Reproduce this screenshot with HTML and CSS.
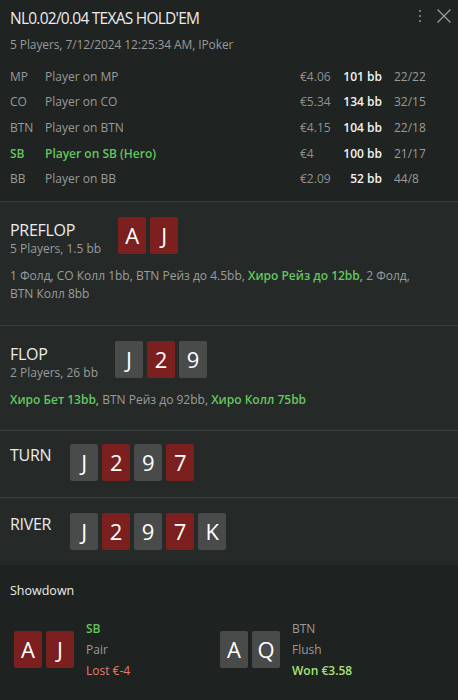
FILE: index.html
```html
<!DOCTYPE html>
<html>
<head>
<meta charset="utf-8">
<link rel="stylesheet" href="styles.css">
</head>
<body>
<div class="panel">
  <header class="head">
    <div class="head-top">
      <div class="title">NL0.02/0.04 TEXAS HOLD'EM</div>
      <div class="head-icons">
        <svg class="icon-dots" width="4" height="14" viewBox="0 0 4 14"><circle cx="2" cy="2" r="1.1" fill="#8a8d8c"/><circle cx="2" cy="7" r="1.1" fill="#8a8d8c"/><circle cx="2" cy="12" r="1.1" fill="#8a8d8c"/></svg>
        <svg class="icon-close" width="16" height="16" viewBox="0 0 16 16"><path d="M1.5 1.5 L14.5 14.5 M14.5 1.5 L1.5 14.5" stroke="#9a9d9c" stroke-width="1.3" fill="none"/></svg>
      </div>
    </div>
    <div class="subtitle">5 Players, 7/12/2024 12:25:34 AM, IPoker</div>
    <div class="players">
      <div class="prow"><span class="pos">MP</span><span class="pname">Player on MP</span><span class="amt">€4.06</span><span class="bb">101 bb</span><span class="stat">22/22</span></div>
      <div class="prow"><span class="pos">CO</span><span class="pname">Player on CO</span><span class="amt">€5.34</span><span class="bb">134 bb</span><span class="stat">32/15</span></div>
      <div class="prow"><span class="pos">BTN</span><span class="pname">Player on BTN</span><span class="amt">€4.15</span><span class="bb">104 bb</span><span class="stat">22/18</span></div>
      <div class="prow hero"><span class="pos">SB</span><span class="pname">Player on SB (Hero)</span><span class="amt">€4</span><span class="bb">100 bb</span><span class="stat">21/17</span></div>
      <div class="prow"><span class="pos">BB</span><span class="pname">Player on BB</span><span class="amt">€2.09</span><span class="bb">52 bb</span><span class="stat">44/8</span></div>
    </div>
  </header>

  <section class="street street-pre">
    <div class="street-top">
      <div class="street-label">
        <div class="street-name">PREFLOP</div>
        <div class="street-sub">5 Players, 1.5 bb</div>
      </div>
      <div class="cards"><span class="card red">A</span><span class="card red">J</span></div>
    </div>
    <div class="actions">1 Фолд, CO Колл 1bb, BTN Рейз до 4.5bb, <b class="hero-act">Хиро Рейз до 12bb,</b> 2 Фолд, BTN Колл 8bb</div>
  </section>

  <section class="street street-flop">
    <div class="street-top">
      <div class="street-label">
        <div class="street-name">FLOP</div>
        <div class="street-sub">2 Players, 26 bb</div>
      </div>
      <div class="cards"><span class="card gray">J</span><span class="card red">2</span><span class="card gray">9</span></div>
    </div>
    <div class="actions"><b class="hero-act">Хиро Бет 13bb,</b> BTN Рейз до 92bb, <b class="hero-act">Хиро Колл 75bb</b></div>
  </section>

  <section class="street street-short">
    <div class="street-top short-top">
      <div class="street-label">
        <div class="street-name">TURN</div>
      </div>
      <div class="cards"><span class="card gray">J</span><span class="card red">2</span><span class="card gray">9</span><span class="card red">7</span></div>
    </div>
  </section>

  <section class="street street-short street-river">
    <div class="street-top short-top">
      <div class="street-label">
        <div class="street-name">RIVER</div>
      </div>
      <div class="cards"><span class="card gray">J</span><span class="card red">2</span><span class="card gray">9</span><span class="card red">7</span><span class="card gray">K</span></div>
    </div>
  </section>

  <section class="showdown">
    <div class="sd-title">Showdown</div>
    <div class="sd-grid">
      <div class="sd-hand">
        <div class="cards"><span class="card red">A</span><span class="card red">J</span></div>
        <div class="sd-info">
          <div class="sd-pos hero-pos">SB</div>
          <div class="sd-combo">Pair</div>
          <div class="sd-res lost">Lost €-4</div>
        </div>
      </div>
      <div class="sd-hand">
        <div class="cards"><span class="card gray">A</span><span class="card gray">Q</span></div>
        <div class="sd-info">
          <div class="sd-pos">BTN</div>
          <div class="sd-combo">Flush</div>
          <div class="sd-res won">Won €3.58</div>
        </div>
      </div>
    </div>
  </section>
</div>
</body>
</html>
```

FILE: styles.css
```css
* { box-sizing: border-box; }
html, body {
  margin: 0;
  padding: 0;
  background: #1e2220;
}
body {
  font-family: "Open Sans", "Noto Sans", sans-serif;
  font-size: 12px;
  color: #9a9d9c;
  width: 458px;
  height: 700px;
  overflow: hidden;
}
.panel {
  display: flex;
  flex-direction: column;
}
.head {
  background: #1f2321;
  padding: 7px 0 9px 10px;
  border-bottom: 1px solid #3a3e3c;
}
.head-top {
  display: flex;
  justify-content: space-between;
  align-items: flex-start;
}
.title {
  font-size: 15.5px;
  line-height: 22px;
  color: #ececec;
  letter-spacing: -0.75px;
}
.head-icons {
  display: flex;
  align-items: center;
  gap: 14px;
  padding: 1px 6px 0 0;
}
.subtitle {
  margin-top: 8px;
  line-height: 16px;
  font-size: 12px;
  color: #979a99;
  letter-spacing: -0.1px;
}
.players {
  margin-top: 11px;
}
.prow {
  display: grid;
  grid-template-columns: 35px 255px 43px 39px 1fr;
  height: 25.6px;
  align-items: center;
  line-height: 16px;
  color: #989b9a;
}
.prow .bb {
  color: #f2f2f2;
  font-weight: 600;
  text-align: right;
  white-space: nowrap;
}
.prow .stat { padding-left: 12px; }
.prow .amt { color: #8f9291; }
.prow.hero .pos,
.prow.hero .pname {
  color: #63c65e;
  font-weight: 600;
}
.street {
  background: #252a29;
  padding: 15px 10px 22px 10px;
  border-bottom: 1px solid #3a3e3c;
}
.street-flop { padding-bottom: 21px; }
.street-short { padding: 13px 10px 16px 10px; }
.street-river { padding-top: 15px; padding-bottom: 15px; border-bottom: none; }
.street-top {
  display: flex;
  align-items: flex-start;
  gap: 17px;
}
.street-top.short-top { gap: 19px; }
.street-label {
  padding-top: 2px;
}
.short-top .street-label { padding-top: 0; }
.street-name {
  font-size: 16px;
  line-height: 22px;
  color: #ececec;
  letter-spacing: -0.3px;
}
.street-sub {
  font-size: 12px;
  line-height: 16px;
  color: #989b9a;
}
.cards {
  display: flex;
  gap: 4px;
}
.card {
  width: 28px;
  height: 37px;
  border-radius: 2px;
  display: flex;
  align-items: center;
  justify-content: center;
  font-size: 22px;
  color: #ffffff;
  line-height: 1;
}
.card.red { background: #7c1f1f; }
.card.gray { background: #494a4a; }
.actions {
  margin-top: 10px;
  line-height: 18px;
  color: #9a9d9c;
  max-width: 410px;
}
.hero-act {
  color: #63c65e;
  font-weight: 600;
}
.showdown {
  background: #1e2220;
  padding: 17px 14px 0 10px;
  flex: 1;
}
.sd-title {
  font-size: 12.5px;
  line-height: 18px;
  color: #ececec;
  font-weight: 500;
}
.sd-grid {
  display: grid;
  grid-template-columns: 206px 1fr;
  margin-top: 18px;
  padding-left: 4px;
}
.sd-hand {
  display: flex;
  align-items: center;
  gap: 12px;
}
.sd-info {
  display: flex;
  flex-direction: column;
  line-height: 21px;
  color: #989b9a;
}
.hero-pos { color: #63c65e; font-weight: 600; }
.lost { color: #e77d6d; }
.won { color: #a9e07a; font-weight: 600; }
```
